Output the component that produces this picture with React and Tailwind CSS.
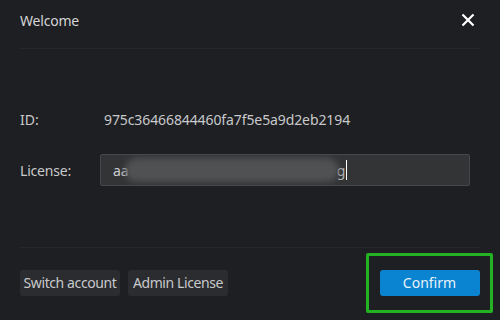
import React, { useState } from "react";

const App = () => {
  const [license] = useState("aa");

  return (
    <div
      className="w-[500px] h-[320px] bg-[#1e1f22] text-[#cfd0d2] flex flex-col overflow-hidden"
      style={{ fontFamily: '"Noto Sans", "Open Sans", sans-serif' }}
    >
      <div className="h-[40px] flex items-center justify-between pl-[20px] pr-[24px] shrink-0">
        <span className="text-[14px] text-[#d4d4d6] tracking-[-0.2px]">Welcome</span>
        <button className="text-white">
          <svg width="16" height="16" viewBox="0 0 16 16">
            <path d="M2.5 2.5 L13.5 13.5 M13.5 2.5 L2.5 13.5" stroke="currentColor" strokeWidth="2.2" />
          </svg>
        </button>
      </div>
      <div className="mt-[8px] mx-[20px] h-px bg-[#26272a]" />

      <div className="flex-1 flex flex-col pt-[58px] px-[20px]">
        <div className="flex items-center h-[24px] text-[14px]">
          <span className="w-[84px] text-[#c8c9cb]">ID:</span>
          <span className="text-[#c8c9cb] tracking-[-0.1px]">975c36466844460fa7f5e5a9d2eb2194</span>
        </div>
        <div className="flex items-center mt-[23px] text-[14px]">
          <span className="w-[80px] text-[#c8c9cb] tracking-[-0.2px]">License:</span>
          <div className="w-[370px] h-[32px] bg-[#333436] border border-[#46474a] rounded-[2px] flex items-center pl-[12px] overflow-hidden">
            <span className="text-[#cfd0d2]">{license}</span>
            <span className="w-[214px] h-[24px] bg-[#505153] rounded-full blur-[3px] -ml-[4px]" />
            <span className="text-[#b9babc] -ml-[2px]">g</span>
            <span className="w-px h-[20px] bg-white ml-[1px]" />
          </div>
        </div>
      </div>

      <div className="mx-[20px] h-px bg-[#26272a]" />
      <div className="h-[72px] flex items-center justify-between pl-[20px] pr-[7px] pb-[3px] shrink-0">
        <div className="flex gap-[8px]">
          <button className="h-[26px] w-[100px] bg-[#2b2c2f] rounded-[3px] text-[14px] text-[#c8c9cb] tracking-[-0.4px] whitespace-nowrap">
            Switch account
          </button>
          <button className="h-[26px] w-[100px] bg-[#2b2c2f] rounded-[3px] text-[14px] text-[#c8c9cb] tracking-[-0.4px] whitespace-nowrap">
            Admin License
          </button>
        </div>
        <div className="w-[127px] h-[60px] border-[3px] border-[#22b222] rounded-[2px] flex items-center justify-center">
          <button className="w-[100px] h-[26px] bg-[#0a84d0] rounded-[3px] text-[14px] text-[#e8f2fa]">
            Confirm
          </button>
        </div>
      </div>
    </div>
  );
};

export default App;
